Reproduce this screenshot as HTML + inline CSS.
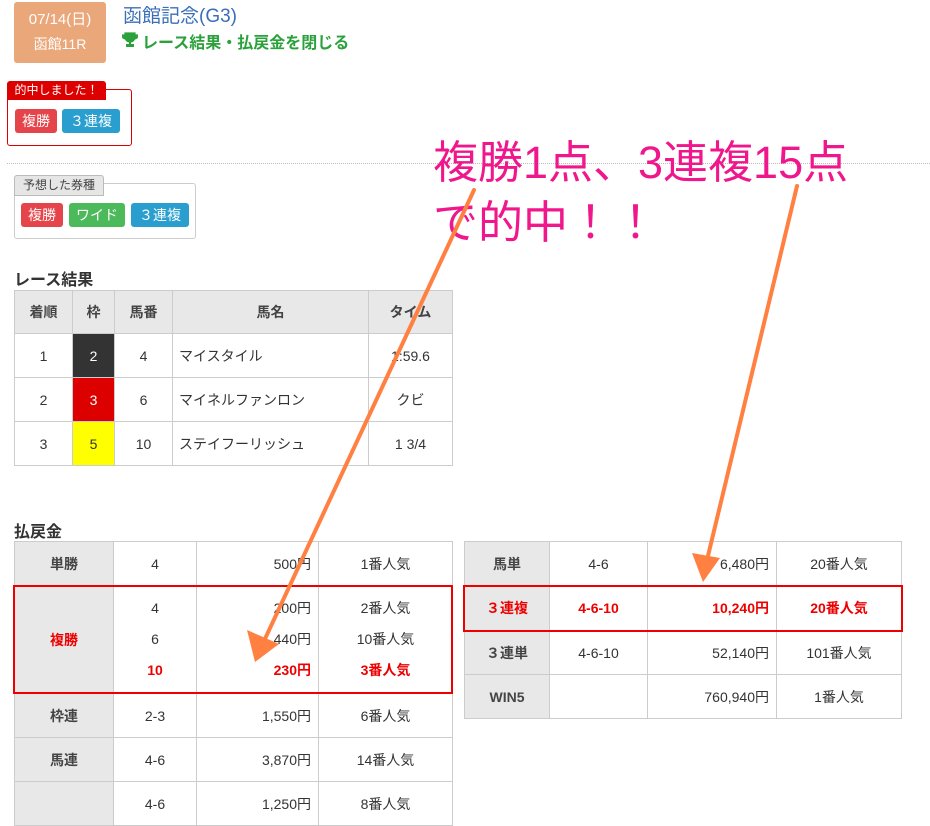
<!DOCTYPE html>
<html><head><meta charset="utf-8"><style>
body{margin:0;width:930px;height:819px;background:#fff;position:relative;overflow:hidden;font-family:"Liberation Sans","Noto Sans CJK JP",sans-serif;color:#333;font-size:14px}
.a{position:absolute}
.badge{position:absolute;height:24px;line-height:24px;color:#fff;border-radius:3px;text-align:center;font-size:14px}
.r{background:#e5454a}.b{background:#2a9fcf}.g{background:#4cb95a}
table{position:absolute;border-collapse:collapse;table-layout:fixed}
td,th{border:1px solid #ccc;text-align:center;padding:0;font-size:14px;color:#333}
th{background:#e8e8e8;font-weight:bold;color:#444}
.rt{text-align:right;padding-right:7px}
.red{color:#e00;font-weight:bold}
h3{position:absolute;margin:0;font-size:16px;font-weight:bold;color:#333}
</style></head><body>
<div class="a" style="left:14px;top:2px;width:92px;height:61px;background:#e9a77a;border-radius:3px;color:#fff;text-align:center;font-size:15px;line-height:20px"><div style="margin-top:8px">07/14(日)</div><div style="font-size:14px;margin-top:4px">函館11R</div></div>
<div class="a" style="left:123px;top:1px;font-size:19px;color:#3a6fb8">函館記念(G3)</div>
<svg class="a" style="left:122px;top:32px" width="16" height="16" viewBox="0 0 16 16"><path d="M3 1h10v4a5 5 0 0 1-10 0z M3 3H0.5a3 3 0 0 0 3 4 M13 3h2.5a3 3 0 0 1-3 4" fill="#2aa13a" stroke="#2aa13a" stroke-width="1.2"/><rect x="7" y="9" width="2" height="3" fill="#2aa13a"/><rect x="4" y="12" width="8" height="3" fill="#2aa13a"/></svg>
<div class="a" style="left:142px;top:29px;font-size:16px;color:#2aa13a;font-weight:bold">レース結果・払戻金を閉じる</div>
<div class="a" style="left:7px;top:89px;width:123px;height:55px;border:1px solid #d00;border-radius:3px"></div>
<div class="a" style="left:7px;top:81px;width:99px;height:19px;background:#d00;color:#fff;font-size:12px;line-height:19px;text-align:center;border-radius:3px 3px 0 0">的中しました！</div>
<div class="badge r" style="left:15px;top:109px;width:42px">複勝</div>
<div class="badge b" style="left:62px;top:109px;width:58px">３連複</div>
<div class="a" style="left:7px;top:163px;width:923px;border-top:1px dotted #bbb"></div>
<div class="a" style="left:14px;top:183px;width:180px;height:54px;border:1px solid #ccc;border-radius:3px"></div>
<div class="a" style="left:14px;top:175px;width:88px;height:19px;background:#e6e6e6;border:1px solid #bbb;color:#444;font-size:12px;line-height:19px;text-align:center;border-radius:3px 3px 0 0">予想した券種</div>
<div class="badge r" style="left:21px;top:203px;width:42px">複勝</div>
<div class="badge g" style="left:69px;top:203px;width:56px">ワイド</div>
<div class="badge b" style="left:131px;top:203px;width:58px">３連複</div>
<h3 style="left:14px;top:266px">レース結果</h3>
<table style="left:14px;top:290px;width:439px">
<col style="width:58px"><col style="width:42px"><col style="width:58px"><col style="width:196px"><col style="width:84px">
<tr style="height:43px"><th>着順</th><th>枠</th><th>馬番</th><th>馬名</th><th>タイム</th></tr>
<tr style="height:44px"><td>1</td><td style="background:#333;color:#fff">2</td><td>4</td><td style="text-align:left;padding-left:6px">マイスタイル</td><td>1:59.6</td></tr>
<tr style="height:44px"><td>2</td><td style="background:#d00;color:#fff">3</td><td>6</td><td style="text-align:left;padding-left:6px">マイネルファンロン</td><td>クビ</td></tr>
<tr style="height:44px"><td>3</td><td style="background:#ff0">5</td><td>10</td><td style="text-align:left;padding-left:6px">ステイフーリッシュ</td><td>1 3/4</td></tr>
</table>
<h3 style="left:14px;top:518px">払戻金</h3>
<table style="left:14px;top:541px;width:439px">
<col style="width:99px"><col style="width:83px"><col style="width:122px"><col style="width:134px">
<tr style="height:44px"><th>単勝</th><td>4</td><td class="rt">500円</td><td>1番人気</td></tr>
<tr style="height:108px"><th style="color:#e00">複勝</th><td style="line-height:31px">4<br>6<br><span class="red">10</span></td><td class="rt" style="line-height:31px">200円<br>440円<br><span class="red">230円</span></td><td style="line-height:31px">2番人気<br>10番人気<br><span class="red">3番人気</span></td></tr>
<tr style="height:44px"><th>枠連</th><td>2-3</td><td class="rt">1,550円</td><td>6番人気</td></tr>
<tr style="height:44px"><th>馬連</th><td>4-6</td><td class="rt">3,870円</td><td>14番人気</td></tr>
<tr style="height:44px"><th></th><td>4-6</td><td class="rt">1,250円</td><td>8番人気</td></tr>
</table>
<div class="a" style="left:13px;top:585px;width:436px;height:105px;border:2px solid #e00"></div>
<table style="left:464px;top:541px;width:438px">
<col style="width:85px"><col style="width:98px"><col style="width:129px"><col style="width:125px">
<tr style="height:44px"><th>馬単</th><td>4-6</td><td class="rt">6,480円</td><td>20番人気</td></tr>
<tr style="height:45px"><th style="color:#e00">３連複</th><td class="red">4-6-10</td><td class="rt red">10,240円</td><td class="red">20番人気</td></tr>
<tr style="height:44px"><th>３連単</th><td>4-6-10</td><td class="rt">52,140円</td><td>101番人気</td></tr>
<tr style="height:44px"><th>WIN5</th><td></td><td class="rt">760,940円</td><td>1番人気</td></tr>
</table>
<div class="a" style="left:463px;top:585px;width:436px;height:43px;border:2px solid #e00"></div>
<div class="a" style="left:433px;top:133px;font-size:45px;color:#f0168c;line-height:60px;white-space:nowrap">複勝1点、3連複15点<br>で的中！！</div>
<svg class="a" style="left:0;top:0" width="930" height="819">
<g stroke="#ff8040" stroke-width="4" fill="#ff8040" stroke-linecap="round">
<line x1="474" y1="190" x2="264" y2="641"/>
<polygon points="255,662 247,630 279,644" stroke="none"/>
<line x1="797" y1="186" x2="707" y2="560"/>
<polygon points="703,582 692,553 720,558" stroke="none"/>
</g></svg>
</body></html>
